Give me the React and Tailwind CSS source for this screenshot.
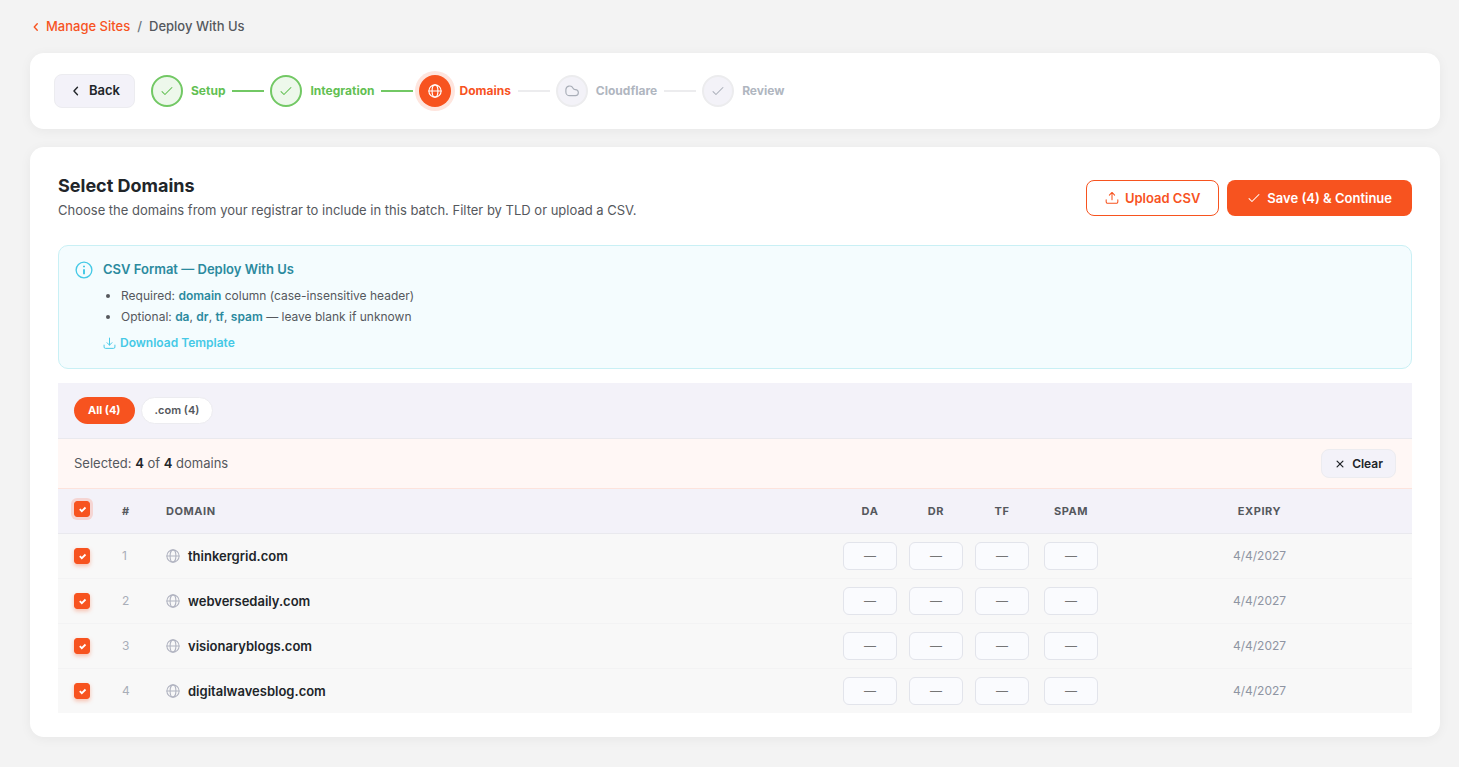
import { useState } from "react";

const domains = ["thinkergrid.com", "webversedaily.com", "visionaryblogs.com", "digitalwavesblog.com"];
const metrics = ["DA", "DR", "TF", "SPAM"];

const shapes = {
  check: <path d="M3.500 13l5 5L20.500 6" />,
  chevron: <path d="M14.500 5.500L8.500 12l6 6.500" />,
  close: <path d="M5 5l14 14M19 5L5 19" />,
  globe: (
    <>
      <circle cx="12" cy="12" r="10.5" />
      <ellipse cx="12" cy="12" rx="5" ry="10.5" />
      <path d="M1.5 12h21" />
    </>
  ),
  cloud: <path d="M8 20a6.500 6.500 0 0 1-6.500-6.500V10a6.500 6.500 0 0 1 12.300-2.900c.8 1.500 2 2.400 3.700 2.500a5.200 5.200 0 0 1 .3 10.400z" />,
  upload: <path d="M12 15V2.500M7.500 7L12 2.500 16.500 7M2 15v3.500A2.500 2.500 0 0 0 4.500 21h15a2.500 2.500 0 0 0 2.500-2.500V15" />,
  download: <path d="M12 2v13M7.500 10.500L12 15l4.500-4.500M2 15v3.500A2.500 2.500 0 0 0 4.500 21h15a2.500 2.500 0 0 0 2.500-2.500V15" />,
  info: (
    <>
      <circle cx="12" cy="12" r="10.500" />
      <path d="M12 11v6.500M12 6.300v1.900" strokeWidth="2.600" strokeLinecap="butt" />
    </>
  ),
};

function Icon({ name, className, weight = 2 }) {
  return (
    <svg viewBox="0 0 24 24" fill="none" stroke="currentColor" strokeWidth={weight} strokeLinecap="round" strokeLinejoin="round" aria-hidden="true" className={`shrink-0 ${className}`}>
      {shapes[name]}
    </svg>
  );
}

const steps = [
  { label: "Setup", icon: "check", state: "done" },
  { label: "Integration", icon: "check", state: "done" },
  { label: "Domains", icon: "globe", state: "active" },
  { label: "Cloudflare", icon: "cloud", state: "todo" },
  { label: "Review", icon: "check", state: "todo" },
];

const circleStyle = {
  done: "border-2 border-[#72c864] bg-[#edf8eb] text-[#5fbf4f]",
  active: "bg-[#f7531f] text-white ring-4 ring-[#fee5de]",
  todo: "border-2 border-[#ececee] bg-[#f3f2f8] text-[#a9aeb8]",
};
const labelStyle = { done: "text-[#62bf52]", active: "text-[#f7531f]", todo: "text-[#b0b6bf]" };

function Step({ label, icon, state, last }) {
  return (
    <li className="flex items-center" aria-current={state === "active" ? "step" : undefined}>
      <span className={`flex size-8 items-center justify-center rounded-full ${circleStyle[state]}`}>
        <Icon name={icon} className="size-3.5" weight={icon === "check" ? 1.800 : 2} />
      </span>
      <span className={`ml-2 text-xs font-bold ${labelStyle[state]}`}>{label}</span>
      {!last && <span className={`mr-1.5 ml-[7px] h-0.5 w-8 ${state === "done" ? "bg-[#72c864]" : "bg-[#ececee]"}`} />}
    </li>
  );
}

function Tick({ label, checked, onChange, header }) {
  return (
    <label className={`relative block size-4 rounded-[3px] ${header ? "ring-3 ring-[#f5d5d3]" : "shadow-[0_2px_4px_rgba(247,83,31,0.35)]"}`}>
      <input type="checkbox" aria-label={label} checked={checked} onChange={onChange} className="peer block size-4 appearance-none rounded-[3px] border border-[#f7531f] bg-white checked:bg-[#f7531f]" />
      <svg viewBox="0 0 16 16" fill="none" stroke="white" strokeWidth="1.8" className="pointer-events-none absolute inset-0 hidden size-4 peer-checked:block" aria-hidden="true">
        <path d="M5.800 8.200l2 2 3.700-3.700" />
      </svg>
    </label>
  );
}

export default function App() {
  const [selected, setSelected] = useState([true, true, true, true]);
  const count = selected.filter(Boolean).length;
  const cardStyle = "bg-white rounded-[14px] shadow-[0_2px_12px_rgba(0,0,0,0.05)]";
  return (
    <div className="min-h-screen bg-[#f3f3f3] pt-4 pr-[19px] pb-[30px] pl-[30px] font-['Inter',sans-serif] text-[#212529]">
      <nav aria-label="Breadcrumb" className="flex h-[21px] items-center text-[13px] font-medium">
        <a href="#sites" className="flex items-center gap-1 text-[#f7531f]">
          <Icon name="chevron" className="size-3" weight={2.8} />
          Manage Sites
        </a>
        <span className="mx-[7px] text-[#6c757d]">/</span>
        <span className="text-[#55585d]">Deploy With Us</span>
      </nav>

      <section className={`mt-4 flex items-center gap-4 px-6 py-[21px] ${cardStyle}`}>
        <button className="flex h-[34px] items-center gap-1.5 rounded-lg border border-[#ececf0] bg-[#f3f2f9] px-3.5 text-[13px] font-semibold">
          <Icon name="chevron" className="size-3.5" weight={2.4} />
          Back
        </button>
        <ol className="flex items-center">
          {steps.map((s, i) => (
            <Step key={s.label} {...s} last={i === steps.length - 1} />
          ))}
        </ol>
      </section>

      <main className={`mt-[18px] px-7 pt-7 pb-6 ${cardStyle}`}>
        <header className="flex items-center justify-between">
          <div>
            <h1 className="text-lg leading-[22px] font-bold">Select Domains</h1>
            <p className="mt-0.5 text-[13px] leading-[22px] text-[#55585d]">Choose the domains from your registrar to include in this batch. Filter by TLD or upload a CSV.</p>
          </div>
          <div className="flex gap-2">
            <button className="flex h-9 items-center gap-1.5 rounded-lg border border-[#f7531f] px-[18px] text-[13px] leading-5 font-semibold text-[#f7531f]">
              <Icon name="upload" className="size-3.5" weight={1.8} />
              Upload CSV
            </button>
            <button className="flex h-9 items-center gap-1.5 rounded-lg bg-[#f7531f] px-5 text-[13px] leading-5 font-semibold text-white">
              <Icon name="check" className="size-3.5" weight={1.8} />
              Save ({count}) &amp; Continue
            </button>
          </div>
        </header>

        <section className="mt-6 flex gap-2.5 rounded-[10px] border border-[#c9f0f5] bg-[#f4fcfe] px-4 pt-3.5 pb-4">
          <Icon name="info" className="mt-px size-[18px] text-[#45c9e6]" weight={1.8} />
          <div className="text-xs text-[#55585d]">
            <h2 className="text-[13px] leading-[18px] font-semibold text-[#2b8a9e]">CSV Format — Deploy With Us</h2>
            <ul className="mt-[7px] list-disc pl-[18px] leading-[21px]">
              <li>Required: <strong className="font-semibold text-[#2b8a9e]">domain</strong> column (case-insensitive header)</li>
              <li>
                Optional: <strong className="font-semibold text-[#2b8a9e]">da</strong>, <strong className="font-semibold text-[#2b8a9e]">dr</strong>, <strong className="font-semibold text-[#2b8a9e]">tf</strong>, <strong className="font-semibold text-[#2b8a9e]">spam</strong> — leave blank if unknown
              </li>
            </ul>
            <a href="#template" className="mt-[7px] flex items-center gap-1 leading-[18px] font-semibold text-[#45c9e6]">
              <Icon name="download" className="size-[13px]" weight={1.8} />
              Download Template
            </a>
          </div>
        </section>

        <section className="mt-3.5">
          <div className="flex h-14 items-center gap-1.5 border-b border-[#e9e9ee] bg-[#f3f2f9] px-4 text-[11px] font-semibold">
            <button className="h-[27px] rounded-full bg-[#f7531f] px-3.5 font-bold text-white">All (4)</button>
            <button className="h-[27px] rounded-full border border-[#ececf0] bg-white px-[13px] text-[#55585d]">.com (4)</button>
          </div>
          <div className="flex h-[50px] items-center justify-between border-b border-[#fde3dc] bg-[#fff7f5] px-4 text-[13px]">
            <p className="text-[#55585d]">
              Selected: <strong className="font-semibold text-[#212529]">{count}</strong> of <strong className="font-semibold text-[#212529]">4</strong> domains
            </p>
            <button onClick={() => setSelected([false, false, false, false])} className="flex h-[29px] items-center gap-1.5 rounded-lg border border-[#ececf0] bg-[#f3f2f9] px-3 text-xs font-semibold">
              <Icon name="close" className="size-3 p-px" weight={3} />
              Clear
            </button>
          </div>
          <table className="w-full table-fixed border-collapse text-center">
            <colgroup>
              <col className="w-12" />
              <col className="w-11" />
              <col />
              <col className="w-[66px]" />
              <col className="w-[66px]" />
              <col className="w-[66px]" />
              <col className="w-[72px]" />
              <col className="w-[305px]" />
            </colgroup>
            <thead className="bg-[#f3f2f9] text-[11px] tracking-wider text-[#55585d]">
              <tr className="h-11 border-b border-[#e9e9ee]">
                <th className="pb-1 pl-4">
                  <Tick header label="Select all domains" checked={count === 4} onChange={(e) => setSelected(selected.map(() => e.target.checked))} />
                </th>
                <th className="pl-4 text-left font-bold">#</th>
                <th className="pl-4 text-left font-bold">DOMAIN</th>
                {metrics.map((m) => <th key={m} className="font-bold">{m}</th>)}
                <th className="font-bold">EXPIRY</th>
              </tr>
            </thead>
            <tbody className="bg-[#f8f8f8]">
              {domains.map((d, i) => (
                <tr key={d} className="h-[45px] border-b border-[#f3f3f4] last:border-b-0">
                  <td className="pl-4">
                    <Tick label={`Select ${d}`} checked={selected[i]} onChange={() => setSelected(selected.map((v, k) => (k === i ? !v : v)))} />
                  </td>
                  <td className="pl-4 text-left text-xs text-[#a9aeb8]">{i + 1}</td>
                  <td className="pl-4">
                    <span className="flex items-center gap-2 text-[13px] leading-5 font-semibold">
                      <Icon name="globe" className="size-3.5 text-[#b0b3c0]" weight={1.8} />
                      {d}
                    </span>
                  </td>
                  {metrics.map((m) => (
                    <td key={m}>
                      <input type="text" aria-label={`${m} for ${d}`} placeholder="—" className="mx-auto block h-7 w-[54px] rounded-md border border-[#e2e4eb] bg-[#fafbfe] text-center text-xs placeholder:text-[#757575]" />
                    </td>
                  ))}
                  <td className="text-xs text-[#8f95a3]">4/4/2027</td>
                </tr>
              ))}
            </tbody>
          </table>
        </section>
      </main>
    </div>
  );
}
